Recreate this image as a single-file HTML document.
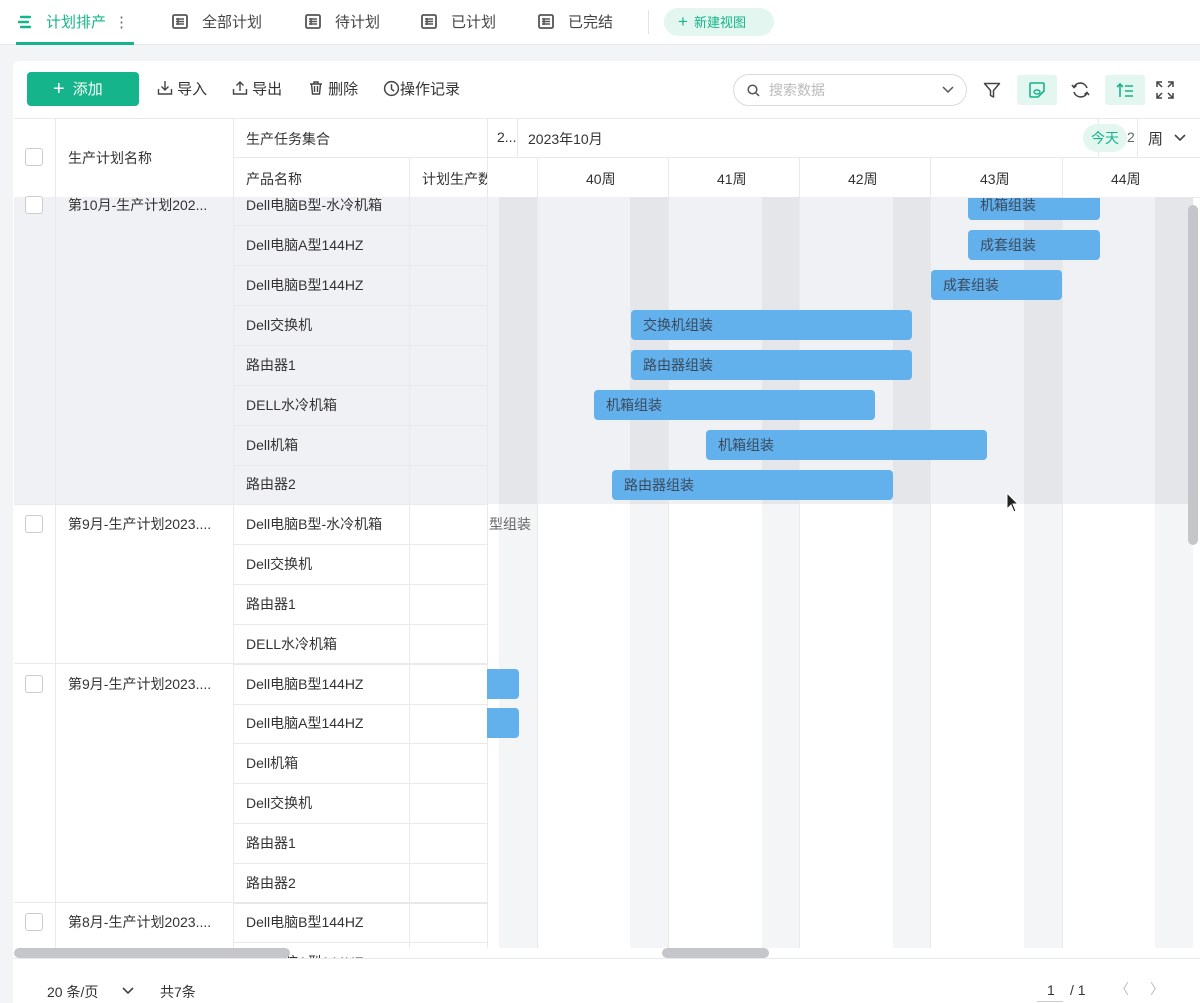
<!DOCTYPE html>
<html><head><meta charset="utf-8">
<style>
*{box-sizing:border-box;margin:0;padding:0}
body{width:1200px;height:1003px;overflow:hidden;background:#f3f4f6;font-family:"Liberation Sans","Noto Sans CJK SC",sans-serif;color:#333;font-size:14px;position:relative}
.a{position:absolute}
.tabs{left:0;top:0;width:1200px;height:45px;background:#fff;border-bottom:1px solid #e8e9eb}
.tab{top:11px;font-size:15px;color:#444;display:flex;align-items:center;gap:14px}
.card{left:13px;top:61px;width:1187px;height:942px;background:#fff;border-radius:6px 0 0 0}
.tb{top:79px;font-size:15px;color:#333;line-height:22px}
.cell{position:absolute;font-size:14px;color:#333;white-space:nowrap;overflow:hidden}
.cb{position:absolute;width:18px;height:18px;border:1px solid #c9ccd1;border-radius:3px;background:#fff}
.bar{position:absolute;height:30px;background:#62b0ec;border-radius:4px;color:#3a4a5c;font-size:14px;line-height:30px;padding-left:12px;white-space:nowrap;overflow:hidden}
</style></head><body>
<div class="a tabs">
  <div class="a" style="left:16px;top:42px;width:118px;height:3px;background:#15b48a"></div>
  <div class="a tab" style="left:18px;color:#15b48a">
    <svg width="16" height="14" viewBox="0 0 16 14"><path d="M3 2h9M1 7h9M3 12h9" stroke="#15b48a" stroke-width="2.4" stroke-linecap="round"/></svg>
    <span style="margin-left:-2px">计划排产</span><span style="color:#666;margin-left:-6px">⋮</span></div>
  <div class="a tab" style="left:172px"><svg width="16" height="15" viewBox="0 0 16 15"><rect x="1" y="1" width="14" height="13" rx="1.5" fill="none" stroke="#555" stroke-width="1.8"/><path d="M4 5h8M4 7.5h8M4 10h8M6 4v7" stroke="#555" stroke-width="1.5"/></svg>全部计划</div>
  <div class="a tab" style="left:305px"><svg width="16" height="15" viewBox="0 0 16 15"><rect x="1" y="1" width="14" height="13" rx="1.5" fill="none" stroke="#555" stroke-width="1.8"/><path d="M4 5h8M4 7.5h8M4 10h8M6 4v7" stroke="#555" stroke-width="1.5"/></svg>待计划</div>
  <div class="a tab" style="left:421px"><svg width="16" height="15" viewBox="0 0 16 15"><rect x="1" y="1" width="14" height="13" rx="1.5" fill="none" stroke="#555" stroke-width="1.8"/><path d="M4 5h8M4 7.5h8M4 10h8M6 4v7" stroke="#555" stroke-width="1.5"/></svg>已计划</div>
  <div class="a tab" style="left:538px"><svg width="16" height="15" viewBox="0 0 16 15"><rect x="1" y="1" width="14" height="13" rx="1.5" fill="none" stroke="#555" stroke-width="1.8"/><path d="M4 5h8M4 7.5h8M4 10h8M6 4v7" stroke="#555" stroke-width="1.5"/></svg>已完结</div>
  <div class="a" style="left:648px;top:10px;width:1px;height:24px;background:#e2e3e5"></div>
  <div class="a" style="left:664px;top:8px;width:110px;height:28px;border-radius:14px;background:#e3f6ef;color:#15b48a;font-size:13px;line-height:28px;padding-left:14px"><b style="font-size:17px;font-weight:400;margin-right:6px">+</b>新建视图</div>
</div>
<div class="a card"></div>
<div class="a" style="left:27px;top:72px;width:112px;height:34px;background:#15b48a;border-radius:4px;color:#fff;font-size:15px;line-height:34px;padding-left:26px"><span style="font-size:20px;margin-right:8px;vertical-align:-1px">+</span>添加</div>
<div class="a tb" style="left:157px">
<svg width="16" height="16" viewBox="0 0 16 16" style="vertical-align:-2px"><path d="M8 1v9M4.5 6.5 8 10l3.5-3.5M1.5 9v5h13V9" fill="none" stroke="#444" stroke-width="1.4"/></svg> 导入</div>
<div class="a tb" style="left:232px">
<svg width="16" height="16" viewBox="0 0 16 16" style="vertical-align:-2px"><path d="M8 11V2M4.5 5.5 8 2l3.5 3.5M1.5 9v5h13V9" fill="none" stroke="#444" stroke-width="1.4"/></svg> 导出</div>
<div class="a tb" style="left:308px">
<svg width="16" height="16" viewBox="0 0 16 16" style="vertical-align:-2px"><path d="M2 4h12M6 4V2h4v2M3.5 4l1 10h7l1-10M6.5 6v6M9.5 6v6" fill="none" stroke="#444" stroke-width="1.4"/></svg> 删除</div>
<div class="a tb" style="left:383px">
<svg width="17" height="17" viewBox="0 0 16 16" style="vertical-align:-3px"><circle cx="8" cy="8" r="6.5" fill="none" stroke="#444" stroke-width="1.4"/><path d="M8 4v4.5l2.5 2" fill="none" stroke="#444" stroke-width="1.4"/></svg>操作记录</div>
<div class="a" style="left:733px;top:74px;width:234px;height:32px;border:1px solid #d8dade;border-radius:16px;color:#bbb;font-size:14px;line-height:30px;padding-left:35px">搜索数据
<svg class="a" style="left:13px;top:9px" width="13" height="13" viewBox="0 0 13 13"><circle cx="5.5" cy="5.5" r="4.3" fill="none" stroke="#555" stroke-width="1.5"/><path d="M9 9l3 3" stroke="#555" stroke-width="1.5"/></svg>
<svg class="a" style="left:208px;top:11px" width="12" height="8" viewBox="0 0 12 8"><path d="M1 1l5 5 5-5" fill="none" stroke="#555" stroke-width="1.5"/></svg></div>
<svg class="a" style="left:983px;top:82px" width="18" height="17" viewBox="0 0 18 17"><path d="M1.5 1.5h15l-6 7v6.5l-3-1.5V8.5z" fill="none" stroke="#444" stroke-width="1.5" stroke-linejoin="round"/></svg>
<div class="a" style="left:1017px;top:75px;width:40px;height:30px;background:#e3f6ef;border-radius:3px"></div>
<svg class="a" style="left:1028px;top:81px" width="18" height="18" viewBox="0 0 18 18"><path d="M2 14V3a1 1 0 0 1 1-1h12a1 1 0 0 1 1 1v7l-6 6H3a1 1 0 0 1-1-1z" fill="none" stroke="#15b48a" stroke-width="1.6"/><ellipse cx="9" cy="11" rx="3" ry="2" fill="none" stroke="#15b48a" stroke-width="1.4"/></svg>
<svg class="a" style="left:1071px;top:81px" width="19" height="18" viewBox="0 0 19 18"><path d="M16 7A7 7 0 0 0 3 6M3 11a7 7 0 0 0 13 1" fill="none" stroke="#444" stroke-width="1.6"/><path d="M1 4l2 2.5 2.5-2M18 14l-2-2.5-2.5 2" fill="none" stroke="#444" stroke-width="1.6"/></svg>
<div class="a" style="left:1105px;top:75px;width:40px;height:30px;background:#e3f6ef;border-radius:3px"></div>
<svg class="a" style="left:1116px;top:81px" width="18" height="18" viewBox="0 0 18 18"><path d="M4 16V3M1 6l3-3 3 3M9 5h8M9 10h8M9 15h8" fill="none" stroke="#15b48a" stroke-width="1.6"/></svg>
<svg class="a" style="left:1156px;top:81px" width="18" height="18" viewBox="0 0 18 18"><path d="M1 6V1h5M12 1h5v5M17 12v5h-5M6 17H1v-5M1 1l5 5M17 1l-5 5M17 17l-5-5M1 17l5-5" fill="none" stroke="#444" stroke-width="1.5"/></svg>

<div id="grid"></div>
<script>
var g=document.getElementById('grid'),h='';
function R(x,y,w,hh,st){h+='<div class="a" style="left:'+x+'px;top:'+y+'px;width:'+w+'px;height:'+hh+'px;'+st+'"></div>';}
function T(x,y,t,st){h+='<div class="cell" style="left:'+x+'px;top:'+y+'px;'+(st||'')+'">'+t+'</div>';}
R(14,118,1186,1,'background:#e8e9eb');
R(233,157,967,1,'background:#e8e9eb');
R(14,197,1186,1,'background:#e8e9eb');
R(487,197,706,307,'background:#f0f1f4');
R(14,197,473,307,'background:#f0f1f4');
var wk=[499,630,762,893,1024,1155];
wk.forEach(function(x){R(x,197,38,307,'background:#e5e6ea');R(x,504,38,444,'background:#f4f5f7');});
[537,668,799,930,1062].forEach(function(x){R(x,158,1,790,'background:#e8e9eb');});
R(517,118,1,40,'background:#e8e9eb');R(1098,118,1,40,'background:#e8e9eb');R(1137,118,1,40,'background:#e8e9eb');
R(55,118,1,830,'background:#e8e9eb');R(233,118,1,830,'background:#e8e9eb');R(409,158,1,790,'background:#e8e9eb');R(487,118,1,830,'background:#e8e9eb');
var rows=[[205,'Dell电脑B型-水冷机箱'],[245,'Dell电脑A型144HZ'],[285,'Dell电脑B型144HZ'],[325,'Dell交换机'],[365,'路由器1'],[405,'DELL水冷机箱'],[445,'Dell机箱'],[484,'路由器2'],[524,'Dell电脑B型-水冷机箱'],[564,'Dell交换机'],[604,'路由器1'],[644,'DELL水冷机箱'],[684,'Dell电脑B型144HZ'],[723,'Dell电脑A型144HZ'],[763,'Dell机箱'],[803,'Dell交换机'],[843,'路由器1'],[883,'路由器2'],[922,'Dell电脑B型144HZ'],[962,'Dell电脑A型144HZ']];
rows.forEach(function(r){var y=r[0];R(233,y+20,254,1,'background:#e8e9eb');T(246,y-10,r[1],'line-height:20px');});
[504,663,902].forEach(function(y){R(14,y,473,1,'background:#e8e9eb');});
[[205,'第10月-生产计划202...'],[524,'第9月-生产计划2023....'],[684,'第9月-生产计划2023....'],[922,'第8月-生产计划2023....']].forEach(function(r){T(68,r[0]-10,r[1],'line-height:20px');h+='<div class="cb" style="left:25px;top:'+(r[0]-9)+'px"></div>';});
h+='<div class="cb" style="left:25px;top:148px"></div>';
T(68,148,'生产计划名称');T(246,129,'生产任务集合');T(246,169,'产品名称');T(422,169,'计划生产数',"width:65px");
T(497,129,'2...');T(528,129,'2023年10月');
[['40周',586],['41周',717],['42周',848],['43周',980],['44周',1111]].forEach(function(w){T(w[1],169,w[0]);});
h+='<div class="a" style="left:1083px;top:124px;width:44px;height:28px;border-radius:14px;background:#e3f6ef;color:#15b48a;font-size:14px;line-height:28px;text-align:center">今天</div>';
T(1127,129,'2','width:8px;color:#666');T(1148,128,'周','font-size:15px');
h+='<svg class="a" style="left:1174px;top:134px" width="12" height="8" viewBox="0 0 12 8"><path d="M1 1l5 5 5-5" fill="none" stroke="#444" stroke-width="1.6"/></svg>';
[[968,190,132,'机箱组装'],[968,230,132,'成套组装'],[931,270,131,'成套组装'],[631,310,281,'交换机组装'],[631,350,281,'路由器组装'],[594,390,281,'机箱组装'],[706,430,281,'机箱组装'],[612,470,281,'路由器组装']].forEach(function(b){var y=b[1],hh=30;if(y<198){hh=30-(198-y);}
h+='<div class="bar" style="left:'+b[0]+'px;top:'+Math.max(y,198)+'px;width:'+b[2]+'px;height:'+hh+'px;line-height:'+(hh<30?hh*2-30:30)+'px;border-radius:'+(hh<30?'0 0 4px 4px':'4px')+'">'+b[3]+'</div>';});
T(489,514,'型组装','color:#666;line-height:20px');
h+='<div class="bar" style="left:487px;top:669px;width:32px;border-radius:0 4px 4px 0"></div><div class="bar" style="left:487px;top:708px;width:32px;border-radius:0 4px 4px 0"></div>';
R(1188,205,10,340,'background:#c4c6c9;border-radius:5px');
R(14,948,276,10,'background:#c4c6c9;border-radius:5px');
R(662,948,107,10,'background:#c4c6c9;border-radius:5px');
R(13,958,1187,45,'background:#fff;border-top:1px solid #e8e9eb');
T(47,982,'20 条/页');
h+='<svg class="a" style="left:122px;top:987px" width="12" height="8" viewBox="0 0 12 8"><path d="M1 1l5 5 5-5" fill="none" stroke="#444" stroke-width="1.6"/></svg>';
T(160,982,'共7条');T(1047,982,'1');R(1037,1001,26,1,'background:#ccc');T(1070,982,'/ 1');
T(1115,979,'〈','color:#bbb');T(1150,979,'〉','color:#bbb');
h+='<svg class="a" style="left:1006px;top:492px" width="14" height="22" viewBox="0 0 14 22"><path d="M1 1v16l4-4 3 7 2-1-3-7h5z" fill="#222" stroke="#fff" stroke-width="1"/></svg>';
g.innerHTML=h;
</script>
</body></html>
